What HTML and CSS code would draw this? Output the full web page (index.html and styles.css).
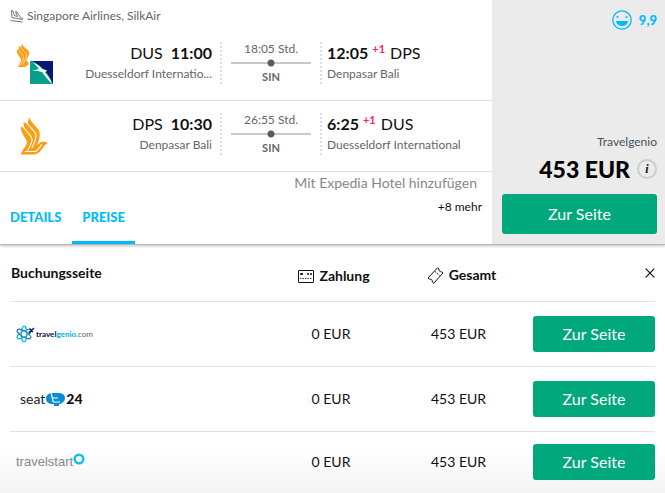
FILE: index.html
```html
<!DOCTYPE html>
<html lang="de">
<head>
<meta charset="utf-8">
<meta name="viewport" content="width=device-width, initial-scale=1">
<title>Flugangebot DUS – DPS</title>
<link rel="stylesheet" href="styles.css">
</head>
<body>
<svg width="0" height="0" class="defs" aria-hidden="true">
  <symbol id="bird" viewBox="0 0 28 38">
    <path fill="#fb9e12" d="M9 0c2 6 9 10 10.500 15 1 4-.5 8-2.500 13l3-2c2-2 5-1 8 0l-3 2c-3 4-5 8-10 9.500H.5c3-6 6-9 6.500-12C7 21 0 17 1 9.500L4 11 3.500 5l4 2z"/>
    <path fill="none" stroke="#fff" stroke-width="1.100" d="M7 5c1 5 8 8 9 13 .5 4-2 8-4 13M3 9c2 5 8 8 9 13 .5 4-3 8-5 13M5 34.500h10c3-1 5-5 7-7"/>
  </symbol>
</svg>
<main>
  <article class="offer">
    <div class="trip">
      <header class="airlines">
        <svg width="13" height="13" viewBox="0 0 13 13" fill="none" stroke="#777"><path d="M1.500.5L3 1l1.500 4.500 3 1L5.500 1.500 7 2l3.500 5.500 2 1v1L2 7.500zM.5 10.500l12 1.500"/></svg>
        <span>Singapore Airlines, SilkAir</span>
      </header>
      <section class="leg">
        <div class="carrier pair">
          <svg class="bird-small" width="14" height="23" viewBox="0 0 28 38" preserveAspectRatio="none"><path fill="#fb9e12" d="M12 0c3 6 11 8 14 13 2 5-3 9-5 14l5 6-8 5H4l6-10C12 22 0 18 2 10l4-2V4l4 1z"/><path fill="none" stroke="#fff" stroke-opacity=".7" stroke-width="1.500" d="M10 5c2 6 10 8 11 13s-5 10-7 16M5 9c2 6 10 8 10 13s-4 9-7 14"/></svg>
          <svg width="23" height="23" viewBox="0 0 23 23"><path fill="#06a18b" d="M0 0h23v23H0z"/><path fill="#0b1770" d="M2 0h21v23C20 15 13 5 2 0z"/><path fill="#fff" d="M2 1c5 2 8 4 10 7l4 1 1 1-2 1c3 4 6 8 7 12-4-4-7-8-10-12l-4-1H2l7-2c-2-3-4-5-7-7z"/></svg>
        </div>
        <div class="stop depart">
          <p class="time"><span>DUS</span><strong>11:00</strong></p>
          <p class="airport">Duesseldorf Internatio...</p>
        </div>
        <div class="duration"><span>18:05 Std.</span><i class="track"></i><b>SIN</b></div>
        <div class="stop">
          <p class="time"><strong>12:05</strong><sup>+1</sup><span>DPS</span></p>
          <p class="airport">Denpasar Bali</p>
        </div>
      </section>
      <section class="leg">
        <div class="carrier"><svg width="28" height="38"><use href="#bird"/></svg></div>
        <div class="stop depart">
          <p class="time"><span>DPS</span><strong>10:30</strong></p>
          <p class="airport">Denpasar Bali</p>
        </div>
        <div class="duration"><span>26:55 Std.</span><i class="track"></i><b>SIN</b></div>
        <div class="stop">
          <p class="time"><strong>6:25</strong><sup>+1</sup><span>DUS</span></p>
          <p class="airport">Duesseldorf International</p>
        </div>
      </section>
      <footer class="foot">
        <nav class="tabs"><a href="#details">Details</a><a href="#preise" class="active">Preise</a></nav>
        <div class="extras">
          <a href="#hotel" class="hotel">Mit Expedia Hotel hinzufügen</a>
          <a href="#mehr" class="more">+8 mehr</a>
        </div>
      </footer>
    </div>
    <aside class="deal">
      <p class="rating">
        <svg width="20" height="20" viewBox="0 0 20 20"><circle cx="10" cy="10" r="9.200" fill="none" stroke="#00baff" stroke-width="1.300"/><circle cx="5.500" cy="7" r="1.100" fill="#00baff"/><circle cx="14.500" cy="7" r="1.100" fill="#00baff"/><path fill="#00baff" d="M4 11h12c-.5 3.500-3 5-6 5s-5.500-1.500-6-5z"/></svg>
        <span>9,9</span>
      </p>
      <div>
        <p class="seller">Travelgenio</p>
        <p class="price"><strong>453 EUR</strong><button class="info" aria-label="Preisinformation">i</button></p>
        <button class="go">Zur Seite</button>
      </div>
    </aside>
  </article>
  <section class="prices" id="preise">
    <table>
      <colgroup><col><col class="c-pay"><col class="c-total"><col class="c-go"></colgroup>
      <thead>
        <tr>
          <th class="site" scope="col">Buchungsseite</th>
          <th scope="col"><span class="head"><svg width="16" height="13" viewBox="0 0 16 13" fill="none" stroke="#111"><rect x=".5" y=".5" width="15" height="12" rx=".5"/><path d="M2.500 3.500h2v1h-2zM9.500 3.500h1v1h-1zM12.500 3.500h1v1h-1z"/><path stroke-width=".8" stroke-dasharray="1.500 1" d="M2 8.500h12"/></svg>Zahlung</span></th>
          <th scope="col"><span class="head"><svg width="17" height="17" viewBox="0 0 17 17" fill="none" stroke="#111"><path d="M10.500.8L12 2c-.3 2 1 3 2.500 2.700L16 6 6.800 16.200 5.300 15c.3-2-1-3.300-2.800-2.800L1 11z"/><path stroke-dasharray="1.500 1" d="M8 4.500l4.500 4"/></svg>Gesamt</span></th>
          <td class="close-cell"><button class="close" aria-label="Schließen"><svg width="10" height="10" viewBox="0 0 10 10" stroke="#111" stroke-width="1.200"><path d="M.7.7l8.600 8.600M9.300.7L.7 9.300"/></svg></button></td>
        </tr>
      </thead>
      <tbody>
        <tr>
          <td><span class="logo genio"><svg width="19" height="18" viewBox="0 0 19 18" fill="none" stroke-width="1.200"><ellipse cx="8" cy="9" rx="2.800" ry="7.800" stroke="#17b5df"/><ellipse cx="8" cy="9" rx="2.800" ry="7.800" stroke="#17b5df" transform="rotate(60 8 9)"/><ellipse cx="8" cy="9" rx="2.800" ry="7.800" stroke="#397ba5" transform="rotate(120 8 9)"/><path stroke="#142450" stroke-width="1.500" d="M13 8l5-5M13.500 3.500l3.500 3.500M13 6.500l1.500 1.500"/></svg><span><b>travel</b><b class="cyan">genio</b>.com</span></span></td>
          <td>0 EUR</td><td>453 EUR</td><td class="action"><button class="go">Zur Seite</button></td>
        </tr>
        <tr>
          <td><span class="logo seat">seat<svg width="19" height="14" viewBox="0 0 19 14"><path fill="#078fd5" d="M5 1h9q5 1 5 5t-5 6h-1v2H8v-2H5Q0 11 0 6.500T5 1z"/><path fill="none" stroke="#fff" stroke-width="1.200" d="M5 0l2 9q0 1 1 1h6M7 6h5"/></svg><b>24</b></span></td>
          <td>0 EUR</td><td>453 EUR</td><td class="action"><button class="go">Zur Seite</button></td>
        </tr>
        <tr>
          <td><span class="logo start">travelstart<svg width="12" height="12" viewBox="0 0 12 12"><circle cx="6" cy="6" r="4.300" fill="none" stroke="#14bdf2" stroke-width="2.400"/></svg></span></td>
          <td>0 EUR</td><td>453 EUR</td><td class="action"><button class="go">Zur Seite</button></td>
        </tr>
      </tbody>
    </table>
  </section>
</main>
</body>
</html>
```
FILE: styles.css
```css
* { box-sizing: border-box; }

body {
  margin: 0;
  background: #fff;
  color: #111;
  font: 14px/20px Lato, "Liberation Sans", sans-serif;
}

p { margin: 0; }
a { text-decoration: none; }
svg { display: block; flex: none; }
.defs { position: absolute; }

button {
  padding: 0;
  border: 0;
  background: none;
  font: inherit;
  color: inherit;
  cursor: pointer;
}

.offer {
  display: flex;
  border-bottom: 1px solid #b5b5b5;
  box-shadow: 0 1px 3px rgba(0, 0, 0, .25);
}

.trip { flex: 1; }

.airlines {
  display: flex;
  align-items: center;
  gap: 4px;
  height: 30px;
  padding: 2px 10px 0;
  font-size: 12px;
  color: #666;
}

.leg {
  display: grid;
  grid-template-columns: 52px 144px 110px 1fr;
  padding: 12px 0 16px 16px;
  border-bottom: 1px solid #e1e1e1;
}

.carrier { padding: 4px 0 0 4px; }

.pair {
  display: flex;
  align-items: flex-end;
  padding: 0;
}

.bird-small { align-self: flex-start; margin-top: 2px; }

.stop { padding-left: 5px; }

.depart {
  padding: 0;
  text-align: right;
}

.time {
  display: flex;
  font-size: 16px;
  line-height: 22px;
}

.time sup {
  margin: 0 5px 0 4px;
  font-size: 11px;
  font-weight: 700;
  line-height: 14px;
  color: #ff2456;
}

.depart .time {
  justify-content: flex-end;
  gap: 8px;
}

.airport {
  font-size: 12px;
  color: #666;
  white-space: nowrap;
}

.duration {
  display: flex;
  flex-direction: column;
  align-items: center;
  margin-left: 8px;
  border: 2px dotted #ddd;
  border-width: 0 2px;
  font-size: 12px;
  line-height: 14px;
  color: #666;
}

.duration b { font-size: 11px; }

.track {
  width: 80px;
  height: 14px;
  background:
    radial-gradient(circle, #5c5c5c 3px, transparent 4px),
    linear-gradient(#c9c9c9, #c9c9c9) center / 100% 2px no-repeat;
}

.foot {
  display: flex;
  justify-content: space-between;
  height: 72px;
}

.tabs {
  display: flex;
  align-items: flex-end;
  gap: 1px;
}

.tabs a {
  padding: 0 10px 14px;
  border-bottom: 3px solid transparent;
  font-size: 13px;
  font-weight: 900;
  text-transform: uppercase;
  color: #00baff;
}

.tabs .active { border-color: #00baff; }

.extras {
  display: flex;
  flex-direction: column;
  gap: 4px;
  padding: 1px 10px 0 0;
  text-align: right;
}

.hotel {
  padding-right: 5px;
  font-size: 14px;
  color: #888;
}

.more { font-size: 12px; color: #111; }

.deal {
  display: flex;
  flex-direction: column;
  justify-content: space-between;
  width: 173px;
  padding: 10px 8px 10px 10px;
  background: #ebebeb;
}

.rating {
  display: flex;
  justify-content: flex-end;
  gap: 7px;
  font-size: 13px;
  font-weight: 900;
  color: #00baff;
}

.seller {
  font-size: 12px;
  text-align: right;
  color: #44525f;
}

.price {
  display: flex;
  align-items: center;
  justify-content: flex-end;
  gap: 7px;
  height: 34px;
  margin-bottom: 8px;
  font-size: 23px;
}

.price strong { font-weight: 900; color: #000; }

.info {
  width: 20px;
  height: 20px;
  border: 2px solid #ccc;
  border-radius: 50%;
  font: italic 700 12px/16px "Liberation Serif", serif;
}

.go {
  width: 100%;
  height: 40px;
  border-radius: 3px;
  background: #00a87b;
  font-size: 16px;
  color: #fff;
}

.prices {
  padding: 0 10px;
  background: linear-gradient(transparent calc(100% - 48px), #f4f4f4);
}

table {
  width: 100%;
  border-collapse: collapse;
  table-layout: fixed;
}

.c-pay { width: 130px; }
.c-total { width: 125px; }
.c-go { width: 134px; }

th, td {
  height: 65px;
  padding: 0;
  border-bottom: 1px solid #e1e1e6;
  text-align: center;
}

thead th, thead td { height: 56px; padding-top: 8px; }
thead .site { padding: 0 0 0 1px; text-align: left; }
tbody tr:last-child td { height: 62px; border: 0; }

.head {
  display: inline-flex;
  align-items: center;
  gap: 5px;
  padding-left: 6px;
}

.close-cell { text-align: right; }
thead .close-cell { padding: 0; }

.action { padding-left: 12px; }
.action .go { height: 36px; vertical-align: middle; }

.logo {
  display: flex;
  align-items: center;
  padding-left: 6px;
}

.genio {
  gap: 1px;
  font-size: 8px;
  color: #53637c;
}

.genio b { font-weight: 900; color: #142450; }
.genio .cyan { color: #09b9e6; }

.seat {
  gap: 1px;
  padding-left: 10px;
  font-size: 14px;
  color: #222;
}

.seat b { font-weight: 900; color: #111; }

.start {
  font: 13px/20px "Liberation Sans", sans-serif;
  color: #888;
}

.start svg { margin-bottom: 6px; }
```
